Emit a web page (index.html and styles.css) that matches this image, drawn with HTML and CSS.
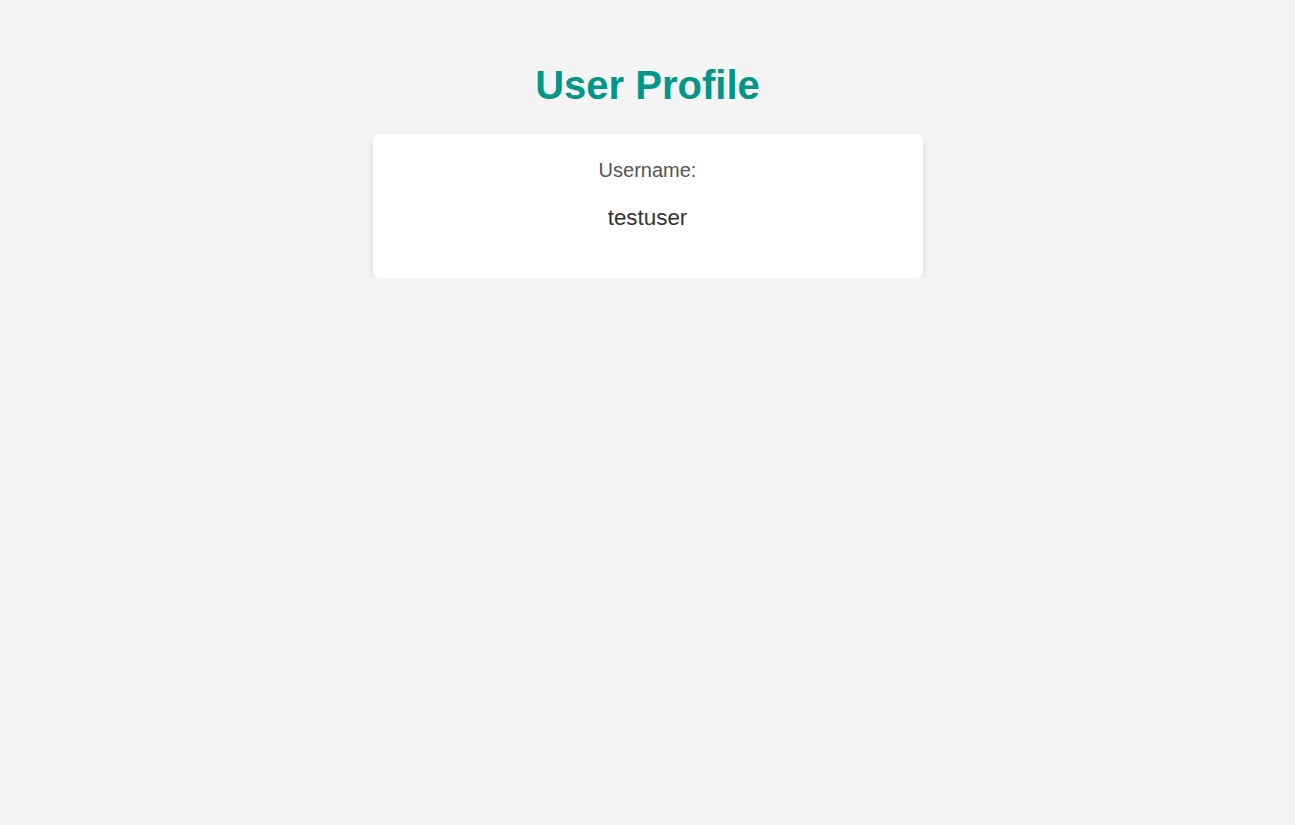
FILE: index.html
```html
<!DOCTYPE html>
<html lang="en">
<head>
<meta charset="utf-8">
<title>User Profile</title>
<link rel="stylesheet" href="styles.css">
</head>
<body>
<main class="page">
  <h1 class="title">User Profile</h1>
  <section class="card">
    <div class="label">Username:</div>
    <div class="value">testuser</div>
  </section>
</main>
</body>
</html>
```
FILE: styles.css
```css
html, body {
  margin: 0;
  padding: 0;
  background: #f4f4f4;
  font-family: "Liberation Sans", Arial, sans-serif;
}
.page {
  display: flex;
  flex-direction: column;
  align-items: center;
  padding-top: 62px;
}
.title {
  margin: 0 0 26px;
  font-size: 40px;
  line-height: 46px;
  font-weight: bold;
  color: #009688;
}
.card {
  box-sizing: border-box;
  width: 550px;
  height: 144px;
  background: #fff;
  border-radius: 6px;
  box-shadow: 0 2px 8px rgba(0, 0, 0, 0.1);
  display: flex;
  flex-direction: column;
  align-items: center;
  padding-top: 25px;
}
.label {
  font-size: 20px;
  line-height: 23px;
  color: #555;
}
.value {
  margin-top: 23px;
  font-size: 22.4px;
  line-height: 26px;
  color: #333;
}
```
